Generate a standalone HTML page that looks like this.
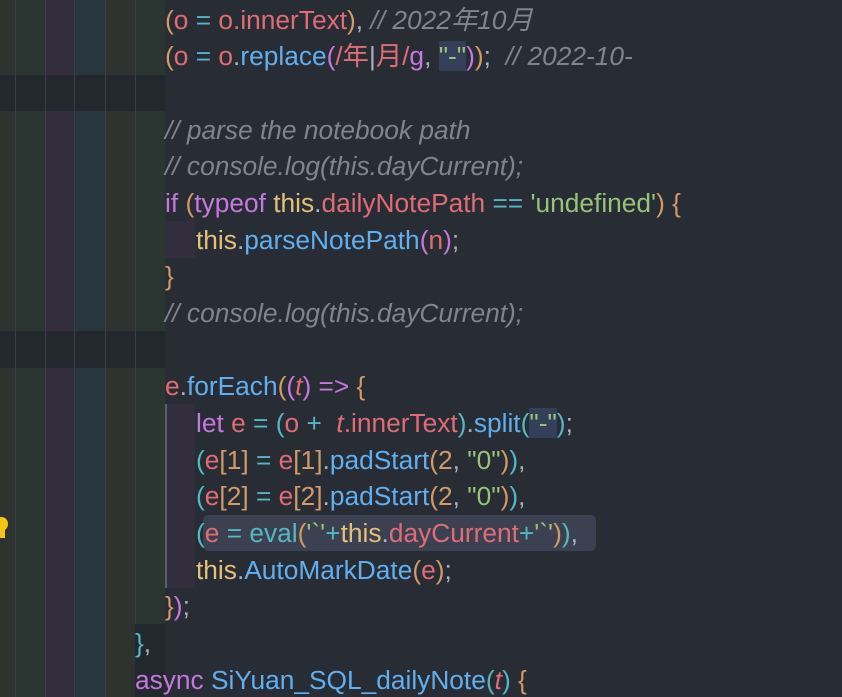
<!DOCTYPE html>
<html><head><meta charset="utf-8"><style>
html,body{margin:0;padding:0;width:842px;height:697px;overflow:hidden;background:#282c34;}
body{position:relative;font-family:"Liberation Sans","Noto Sans CJK SC",sans-serif;font-size:26.3px;}
.bg{position:absolute;}
.ln{position:absolute;height:36.67px;line-height:36.67px;white-space:pre;}
.r{color:#e06c75}.b{color:#61afef}.p{color:#c678dd}.c{color:#56b6c2}.o{color:#d19a66}.y{color:#e5c07b}.g{color:#98c379}.w{color:#abb2bf}
.cm{color:#7f848e;font-style:italic}
.hl{background:#34405a}
.gl{position:absolute;top:0;width:1px;height:697px;background:#3a3f47;}
</style></head><body>
<div class="bg" style="left:0;top:0;width:165px;height:697px;background:#23272e"></div>
<div class="bg" style="left:0;top:0;width:15px;height:75px;background:#2f332f"></div>
<div class="bg" style="left:15px;top:0;width:30px;height:75px;background:#2b3633"></div>
<div class="bg" style="left:45px;top:0;width:29px;height:75px;background:#332e3d"></div>
<div class="bg" style="left:74px;top:0;width:31px;height:75px;background:#28363d"></div>
<div class="bg" style="left:105px;top:0;width:30px;height:75px;background:#2f332f"></div>
<div class="bg" style="left:135px;top:0;width:30px;height:75px;background:#2b3633"></div>

<div class="bg" style="left:0;top:111px;width:15px;height:220px;background:#2f332f"></div>
<div class="bg" style="left:15px;top:111px;width:30px;height:220px;background:#2b3633"></div>
<div class="bg" style="left:45px;top:111px;width:29px;height:220px;background:#332e3d"></div>
<div class="bg" style="left:74px;top:111px;width:31px;height:220px;background:#28363d"></div>
<div class="bg" style="left:105px;top:111px;width:30px;height:220px;background:#2f332f"></div>
<div class="bg" style="left:135px;top:111px;width:30px;height:220px;background:#2b3633"></div>
<div class="bg" style="left:165px;top:221px;width:30px;height:37px;background:#332e3d"></div>

<div class="bg" style="left:0;top:368px;width:15px;height:329px;background:#2f332f"></div>
<div class="bg" style="left:15px;top:368px;width:30px;height:329px;background:#2b3633"></div>
<div class="bg" style="left:45px;top:368px;width:29px;height:329px;background:#332e3d"></div>
<div class="bg" style="left:74px;top:368px;width:31px;height:329px;background:#28363d"></div>
<div class="bg" style="left:105px;top:368px;width:30px;height:329px;background:#2f332f"></div>
<div class="bg" style="left:135px;top:368px;width:30px;height:256px;background:#2b3633"></div>
<div class="bg" style="left:165px;top:404px;width:30px;height:184px;background:#332e3d"></div>
<div class="bg" style="left:165px;top:404px;width:2px;height:184px;background:#5a5f68"></div>

<div class="gl" style="left:15px"></div>
<div class="gl" style="left:45px"></div>
<div class="gl" style="left:74px"></div>
<div class="gl" style="left:105px"></div>
<div class="gl" style="left:135px;top:0;height:624px"></div>

<div class="bg" style="left:203px;top:515px;width:393px;height:36px;background:#3b4150;border-radius:5px"></div>
<div class="bg" style="left:-5px;top:517px;width:13px;height:14px;border-radius:50%;background:#f5c518"></div>
<div class="bg" style="left:0px;top:529px;width:5px;height:9px;background:#f5c518"></div>

<div class="ln" style="left:165px;top:1.7px"><span class="o">(</span><span class="r">o</span> <span class="c">=</span> <span class="r">o.innerText</span><span class="o">)</span><span class="w">,</span> <span class="cm">// 2022年10月</span></div>
<div class="ln" style="left:165px;top:38.4px"><span class="o">(</span><span class="r">o</span> <span class="c">=</span> <span class="r">o</span><span class="w">.</span><span class="b">replace</span><span class="p">(</span><span class="r">/年</span><span class="w">|</span><span class="r">月/</span><span class="p">g</span><span class="w">,</span> <span class="g hl">"-"</span><span class="p">)</span><span class="o">)</span><span class="w">;</span>  <span class="cm">// 2022-10-</span></div>
<div class="ln cm" style="left:165px;top:111.7px">// parse the notebook path</div>
<div class="ln cm" style="left:165px;top:148.4px">// console.log(this.dayCurrent);</div>
<div class="ln" style="left:165px;top:185px"><span class="p">if</span> <span class="o">(</span><span class="p">typeof</span> <span class="y">this</span><span class="w">.</span><span class="r">dailyNotePath</span> <span class="c">==</span> <span class="g">'undefined'</span><span class="o">)</span> <span class="o">{</span></div>
<div class="ln" style="left:196px;top:221.7px"><span class="y">this</span><span class="w">.</span><span class="b">parseNotePath</span><span class="p">(</span><span class="r">n</span><span class="p">)</span><span class="w">;</span></div>
<div class="ln o" style="left:165px;top:258.4px">}</div>
<div class="ln cm" style="left:165px;top:295px">// console.log(this.dayCurrent);</div>
<div class="ln" style="left:165px;top:368.4px"><span class="r">e</span><span class="w">.</span><span class="b">forEach</span><span class="o">(</span><span class="p">(</span><span class="r" style="font-style:italic">t</span><span class="p">)</span> <span class="p">=&gt;</span> <span class="o">{</span></div>
<div class="ln" style="left:196px;top:405px"><span class="p">let</span> <span class="r">e</span> <span class="c">=</span> <span class="c">(</span><span class="r">o</span> <span class="c">+</span>  <span class="r"><i>t</i>.innerText</span><span class="c">)</span><span class="w">.</span><span class="b">split</span><span class="c">(</span><span class="g hl">"-"</span><span class="c">)</span><span class="w">;</span></div>
<div class="ln" style="left:196px;top:441.7px"><span class="c">(</span><span class="r">e</span><span class="o">[1]</span> <span class="c">=</span> <span class="r">e</span><span class="o">[1]</span><span class="w">.</span><span class="b">padStart</span><span class="o">(2</span><span class="w">,</span> <span class="g">"0"</span><span class="o">)</span><span class="c">)</span><span class="w">,</span></div>
<div class="ln" style="left:196px;top:478.4px"><span class="c">(</span><span class="r">e</span><span class="o">[2]</span> <span class="c">=</span> <span class="r">e</span><span class="o">[2]</span><span class="w">.</span><span class="b">padStart</span><span class="o">(2</span><span class="w">,</span> <span class="g">"0"</span><span class="o">)</span><span class="c">)</span><span class="w">,</span></div>
<div class="ln" style="left:196px;top:515px"><span class="c">(</span><span class="r">e</span> <span class="c">=</span> <span class="c">eval</span><span class="o">(</span><span class="g">'`'</span><span class="c">+</span><span class="y">this</span><span class="w">.</span><span class="r">dayCurrent</span><span class="c">+</span><span class="g">'`'</span><span class="o">)</span><span class="c">)</span><span class="w">,</span></div>
<div class="ln" style="left:196px;top:551.7px"><span class="y">this</span><span class="w">.</span><span class="b">AutoMarkDate</span><span class="o">(</span><span class="r">e</span><span class="o">)</span><span class="w">;</span></div>
<div class="ln" style="left:165px;top:588.4px"><span class="o">}</span><span class="p">)</span><span class="w">;</span></div>
<div class="ln" style="left:135px;top:625px"><span class="c">}</span><span class="w">,</span></div>
<div class="ln" style="left:135px;top:661.7px"><span class="p">async</span> <span class="b">SiYuan_SQL_dailyNote</span><span class="c">(</span><span class="r" style="font-style:italic">t</span><span class="c">)</span> <span class="o">{</span></div>
</body></html>
